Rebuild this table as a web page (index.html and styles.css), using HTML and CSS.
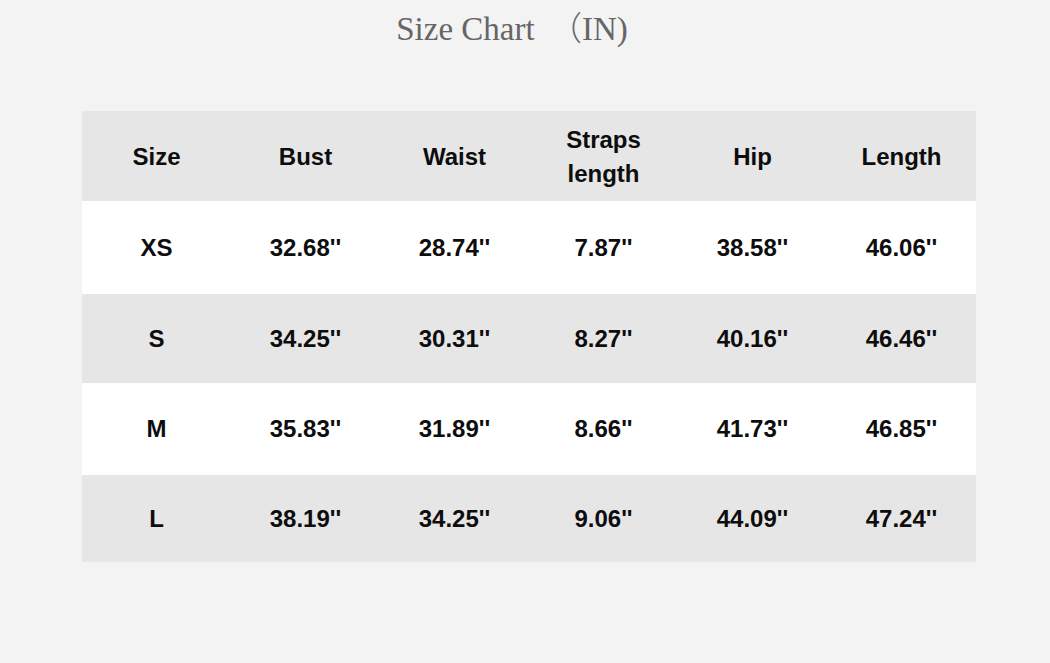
FILE: index.html
```html
<!DOCTYPE html>
<html>
<head>
<meta charset="utf-8">
<link rel="stylesheet" href="styles.css">
</head>
<body>
<h1 class="title">Size Chart <span class="paren">（</span>IN)</h1>
<table class="chart">
  <thead>
    <tr class="row head">
      <th>Size</th><th>Bust</th><th>Waist</th><th>Straps<br>length</th><th>Hip</th><th>Length</th>
    </tr>
  </thead>
  <tbody>
    <tr class="row white r1"><td>XS</td><td>32.68''</td><td>28.74''</td><td>7.87''</td><td>38.58''</td><td>46.06''</td></tr>
    <tr class="row gray r2"><td>S</td><td>34.25''</td><td>30.31''</td><td>8.27''</td><td>40.16''</td><td>46.46''</td></tr>
    <tr class="row white r3"><td>M</td><td>35.83''</td><td>31.89''</td><td>8.66''</td><td>41.73''</td><td>46.85''</td></tr>
    <tr class="row gray r4"><td>L</td><td>38.19''</td><td>34.25''</td><td>9.06''</td><td>44.09''</td><td>47.24''</td></tr>
  </tbody>
</table>
</body>
</html>
```
FILE: styles.css
```css
html, body {
  margin: 0;
  padding: 0;
  background: #f3f3f3;
}
body {
  width: 1050px;
  height: 663px;
  overflow: hidden;
}
.title {
  margin: 0;
  padding: 8px 26px 0 0;
  height: 100px;
  box-sizing: border-box;
  text-align: center;
  font-family: "Liberation Serif", "Noto Serif CJK SC", serif;
  font-weight: normal;
  font-size: 33px;
  line-height: 36px;
  color: #666666;
}
.paren {
  font-family: "Noto Sans CJK SC", sans-serif;
  font-weight: 300;
  padding-left: 6px;
}
.chart {
  margin: 11px 0 0 82px;
  width: 894px;
  border-collapse: collapse;
  table-layout: fixed;
  font-family: "Liberation Sans", Arial, sans-serif;
  font-weight: bold;
  font-size: 24px;
  color: #0d0d0d;
}
.chart th, .chart td {
  padding: 0;
  text-align: center;
  vertical-align: middle;
  font-weight: bold;
}
.chart th {
  line-height: 34px;
  padding-top: 2px;
}
.head { height: 90px; background: #e6e6e6; }
.white { background: #ffffff; }
.gray { background: #e6e6e6; }
.r1 { height: 93px; }
.r2 { height: 89px; }
.r3 { height: 92px; }
.r4 { height: 87px; }
```
